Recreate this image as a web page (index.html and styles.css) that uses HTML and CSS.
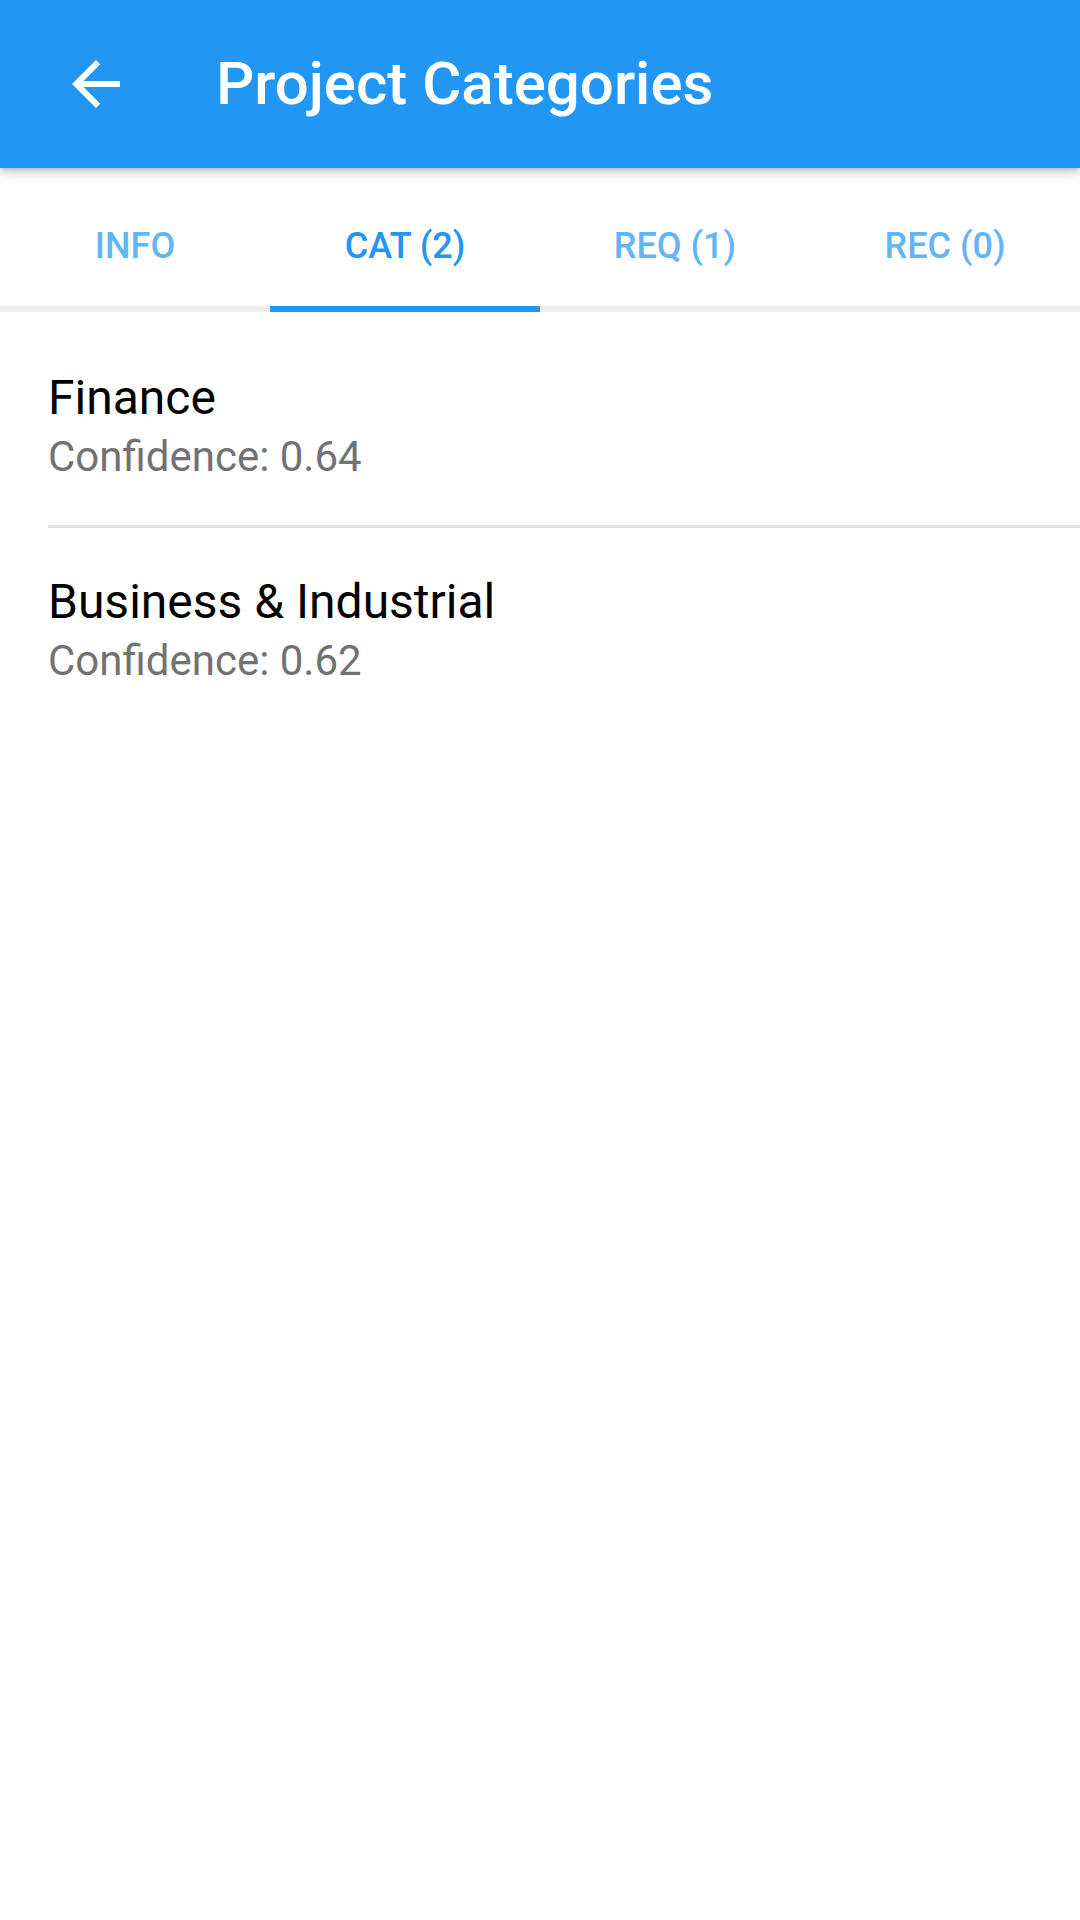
FILE: index.html
```html
<!DOCTYPE html>
<html lang="en">
<head>
<meta charset="utf-8">
<title>Project Categories</title>
<link rel="stylesheet" href="styles.css">
</head>
<body>
<div class="screen">
  <header class="appbar">
    <button class="back" aria-label="Back">
      <svg viewBox="0 0 24 24" width="72" height="72"><path fill="#fff" d="M20 11H7.83l5.59-5.59L12 4l-8 8 8 8 1.41-1.41L7.83 13H20v-2z"/></svg>
    </button>
    <h1 class="title">Project Categories</h1>
  </header>
  <nav class="tabs">
    <div class="tab">INFO</div>
    <div class="tab active">CAT (2)</div>
    <div class="tab">REQ (1)</div>
    <div class="tab">REC (0)</div>
  </nav>
  <ul class="list">
    <li class="item">
      <div class="primary">Finance</div>
      <div class="secondary">Confidence: 0.64</div>
    </li>
    <li class="item">
      <div class="primary">Business &amp; Industrial</div>
      <div class="secondary">Confidence: 0.62</div>
    </li>
  </ul>
</div>
</body>
</html>
```

FILE: styles.css
```css
html, body {
  margin: 0;
  padding: 0;
  background: #ffffff;
}
body {
  font-family: Roboto, "Noto Sans", "Liberation Sans", sans-serif;
  width: 1080px;
  height: 1920px;
  overflow: hidden;
}
.screen {
  display: flex;
  flex-direction: column;
  width: 1080px;
  height: 1920px;
}
.appbar {
  position: relative;
  z-index: 2;
  height: 168px;
  background: #2196F3;
  display: flex;
  align-items: center;
  box-shadow: 0 3px 6px rgba(0, 0, 0, 0.22), 0 6px 14px rgba(0, 0, 0, 0.08);
  flex: none;
}
.back {
  margin-left: 60px;
  width: 72px;
  height: 72px;
  padding: 0;
  border: 0;
  background: transparent;
  display: flex;
}
.title {
  margin: 0 0 0 84px;
  color: #ffffff;
  font-size: 60px;
  font-weight: 500;
  line-height: 72px;
}
.tabs {
  display: grid;
  grid-template-columns: repeat(4, 1fr);
  border-bottom: 6px solid #eeeeee;
  flex: none;
}
.tab {
  height: 120px;
  padding-top: 18px;
  display: flex;
  align-items: center;
  justify-content: center;
  font-size: 36px;
  font-weight: 500;
  color: #64B5F6;
  position: relative;
}
.tab.active {
  color: #2196F3;
}
.tab.active::after {
  content: "";
  position: absolute;
  left: 0;
  right: 0;
  bottom: -6px;
  height: 6px;
  background: #2196F3;
}
.list {
  list-style: none;
  margin: 0;
  padding: 12px 0 0 48px;
}
.item {
  padding: 46px 0 43px 0;
}
.item + .item {
  border-top: 3px solid #e0e0e0;
}
.primary {
  font-size: 48px;
  line-height: 56px;
  color: #000000;
}
.secondary {
  margin-top: 6px;
  font-size: 42px;
  line-height: 50px;
  color: #727272;
}
```
